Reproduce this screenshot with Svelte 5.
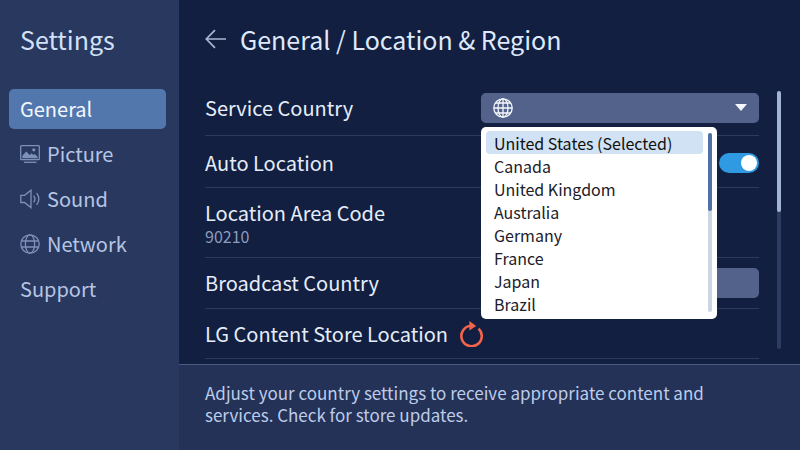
<script lang="ts">
  let active = $state('General');
  let open = $state(true);
  let country = $state('United States');
  let autoLocation = $state(true);

  const menu = [
    { name: 'General', icon: '' },
    { name: 'Picture', icon: 'picture' },
    { name: 'Sound', icon: 'sound' },
    { name: 'Network', icon: 'network' },
    { name: 'Support', icon: '' }
  ];

  const countries = [
    'United States',
    'Canada',
    'United Kingdom',
    'Australia',
    'Germany',
    'France',
    'Japan',
    'Brazil'
  ];
</script>

<div class="settings">
  <aside class="sidebar">
    <h2>Settings</h2>
    <nav>
      {#each menu as item}
        <button
          class="nav-item {active === item.name ? 'active' : ''}"
          onclick={() => (active = item.name)}
        >
          {#if item.icon === 'picture'}
            <svg class="icon" viewBox="0 0 20 20" aria-hidden="true">
              <rect x=".7" y="1.7" width="18.6" height="14" rx=".8" />
              <path class="solid" d="M2.3 14.2v-2.4l4-4.4 3.4 3.6 2-1.7 1.7 1.7 1.4-1.1 2.9 3v1.3z" />
              <circle class="solid" cx="13.8" cy="5.8" r="1.6" />
              <path d="M4 18.3h12.5" />
            </svg>
          {:else if item.icon === 'sound'}
            <svg class="icon" viewBox="0 0 20 20" aria-hidden="true">
              <path d="M.8 6.3h3.7L11 1.2v17.4l-6.5-5.1H.8z" />
              <path d="M13.6 6.6q2.6 3.4 0 6.8M16.6 4.2q4.6 5.7 0 11.6" />
            </svg>
          {:else if item.icon === 'network'}
            <svg class="icon" viewBox="0 0 20 20" aria-hidden="true">
              <circle cx="10" cy="10" r="9.2" />
              <ellipse cx="10" cy="10" rx="4.6" ry="9.2" />
              <path d="M1.4 7h17.2M1.4 13h17.2" />
            </svg>
          {/if}
          {item.name}
        </button>
      {/each}
    </nav>
  </aside>

  <main>
    <header>
      <button class="back" aria-label="Back">
        <svg viewBox="0 0 22 20" aria-hidden="true">
          <path d="M21 10H1.5M10 1.2L1.3 10l8.7 8.8" />
        </svg>
      </button>
      <h1>General / Location &amp; Region</h1>
    </header>

    <div class="body">
      <div class="rows">
        <div class="row first">
          <label for="service-list">Service Country</label>
          <div class="dropdown">
            <button
              class="field"
              aria-label="Service Country"
              aria-expanded={open}
              onclick={() => (open = !open)}
            >
              <svg class="icon" viewBox="0 0 20 20" aria-hidden="true">
                <circle cx="10" cy="10" r="9.2" />
                <ellipse cx="10" cy="10" rx="5" ry="9.2" />
                <path d="M10 .8v18.4M.8 10h18.4M2.4 5h15.2M2.4 15h15.2" />
              </svg>
              <svg class="arrow" viewBox="0 0 12 7" aria-hidden="true"><path d="M0 0h12L6 7z" /></svg>
            </button>
            {#if open}
              <div class="popup">
                <select id="service-list" size="8" bind:value={country}>
                  {#each countries as c}
                    <option value={c}>{c}{c === country ? ' (Selected)' : ''}</option>
                  {/each}
                </select>
                <div class="track"><div class="thumb"></div></div>
              </div>
            {/if}
          </div>
        </div>

        <div class="row auto">
          <label for="auto-location">Auto Location</label>
          <input id="auto-location" class="toggle" type="checkbox" role="switch" bind:checked={autoLocation} />
        </div>

        <div class="row tall">
          <div>
            <div>Location Area Code</div>
            <div class="code">90210</div>
          </div>
        </div>

        <div class="row">
          <label for="broadcast">Broadcast Country</label>
          <select id="broadcast" class="field"></select>
        </div>

        <div class="row last">
          <span>LG Content Store Location</span>
          <button class="refresh" aria-label="Refresh">
            <svg viewBox="0 0 24 26" aria-hidden="true">
              <path d="M19.6 7.6A10.2 10.2 0 1 1 12 4.8" />
              <path class="head" d="M10.4 0l6.8 4.9-6.8 4.7z" />
            </svg>
          </button>
        </div>
      </div>
      <div class="track page-track"><div class="thumb"></div></div>
    </div>

    <footer>
      <p>Adjust your country settings to receive appropriate content and services. Check for store updates.</p>
    </footer>
  </main>
</div>

<style>
  :global(body) {
    margin: 0;
    background: #121f40;
  }

  .settings {
    display: flex;
    min-height: 100vh;
    font-family: 'Noto Sans CJK KR', 'Noto Sans', sans-serif;
    font-size: 20px;
    line-height: 24px;
    color: #e6edfa;
  }

  button,
  select {
    font: inherit;
    color: inherit;
    border: none;
    background: none;
    padding: 0;
    margin: 0;
  }

  svg {
    flex: none;
    fill: none;
    stroke: currentColor;
  }

  h1,
  h2 {
    margin: 0;
    font-size: 25px;
    line-height: 32px;
    font-weight: 400;
  }

  .sidebar {
    flex: none;
    box-sizing: border-box;
    width: 179px;
    padding: 23px 13px 0 9px;
    background: #29385f;
  }

  .sidebar h2 {
    padding-left: 11px;
    color: #d3e1f8;
  }

  nav {
    display: flex;
    flex-direction: column;
    gap: 5px;
    margin-top: 34px;
  }

  .nav-item {
    display: flex;
    align-items: center;
    gap: 7px;
    height: 40px;
    padding: 0 11px;
    border-radius: 5px;
    color: #b5c5e3;
    text-align: left;
  }

  .nav-item.active {
    background: #5277ad;
    color: #f3f7ff;
  }

  .icon {
    width: 20px;
    height: 20px;
    stroke-width: 1.3;
  }

  .nav-item .icon {
    color: #7d90b8;
  }

  .icon .solid {
    fill: currentColor;
    stroke: none;
  }

  main {
    flex: 1;
    min-width: 0;
    display: flex;
    flex-direction: column;
  }

  header {
    display: flex;
    align-items: center;
    gap: 13px;
    padding: 23px 26px 0;
    color: #dfe9fb;
  }

  .back svg {
    display: block;
    width: 22px;
    height: 20px;
    stroke: #a9b6d2;
    stroke-width: 1.7;
  }

  .body {
    flex: 1;
    display: flex;
    gap: 18px;
    padding: 27px 19px 5px 26px;
  }

  .rows {
    flex: 1;
  }

  .row {
    display: flex;
    align-items: center;
    justify-content: space-between;
    box-sizing: border-box;
    height: 51px;
    border-bottom: 1px solid #2c3a5f;
  }

  .row.first {
    height: 54px;
    padding-bottom: 2px;
  }

  .row.auto {
    height: 52px;
    padding-top: 2px;
  }

  .row.tall {
    height: 70px;
    padding-top: 2px;
  }

  .row.last {
    height: 50px;
    justify-content: flex-start;
    gap: 11px;
  }

  .code {
    font-size: 16px;
    line-height: 22px;
    color: #8d9bbd;
  }

  .dropdown {
    position: relative;
    width: 278px;
  }

  .field {
    display: flex;
    align-items: center;
    justify-content: space-between;
    box-sizing: border-box;
    width: 278px;
    height: 30px;
    padding: 0 12px;
    border-radius: 5px;
    background: #52628a;
    color: #f4f7fd;
    appearance: none;
  }

  .arrow {
    width: 12px;
    height: 7px;
    fill: currentColor;
    stroke: none;
  }

  .popup {
    position: absolute;
    top: 34px;
    left: 0;
    z-index: 1;
    display: flex;
    box-sizing: border-box;
    width: 236px;
    padding: 4px 5px;
    border-radius: 5px;
    background: #fff;
  }

  .popup select {
    flex: 1;
    height: 184px;
    overflow: hidden;
    outline: none;
    font-size: 16px;
    color: #1c2029;
  }

  .popup option {
    box-sizing: border-box;
    height: 23px;
    min-height: 23px;
    padding: 0 8px;
    border-radius: 4px;
  }

  .popup option:checked {
    background: linear-gradient(#d0e2f4, #d0e2f4);
  }

  .track {
    flex: none;
    width: 4px;
    margin: 2px 0 3px 5px;
    border-radius: 2px;
    background: #cdd4e2;
  }

  .thumb {
    height: 44%;
    border-radius: 2px;
    background: #5071a8;
  }

  .page-track {
    margin: 9px 0 10px;
    background: #2f3c62;
  }

  .page-track .thumb {
    height: 47%;
    background: #a3b3d3;
  }

  .toggle {
    appearance: none;
    box-sizing: border-box;
    width: 40px;
    height: 20px;
    margin: 0;
    padding: 2px;
    border-radius: 10px;
    background: #52628a;
  }

  .toggle::before {
    content: '';
    display: block;
    width: 16px;
    height: 16px;
    border-radius: 50%;
    background: #fff;
  }

  .toggle:checked {
    background: #2f9ae2;
  }

  .toggle:checked::before {
    margin-left: auto;
  }

  .refresh svg {
    display: block;
    width: 24px;
    height: 26px;
    stroke: #f3644c;
    stroke-width: 2.6;
  }

  .refresh .head {
    fill: #f3644c;
    stroke: none;
  }

  footer {
    padding: 17px 90px 25px 26px;
    border-top: 1px solid #4a5a85;
    background: #243257;
    color: #bdccea;
    font-size: 17px;
    line-height: 22px;
  }

  footer p {
    margin: 0;
  }
</style>
